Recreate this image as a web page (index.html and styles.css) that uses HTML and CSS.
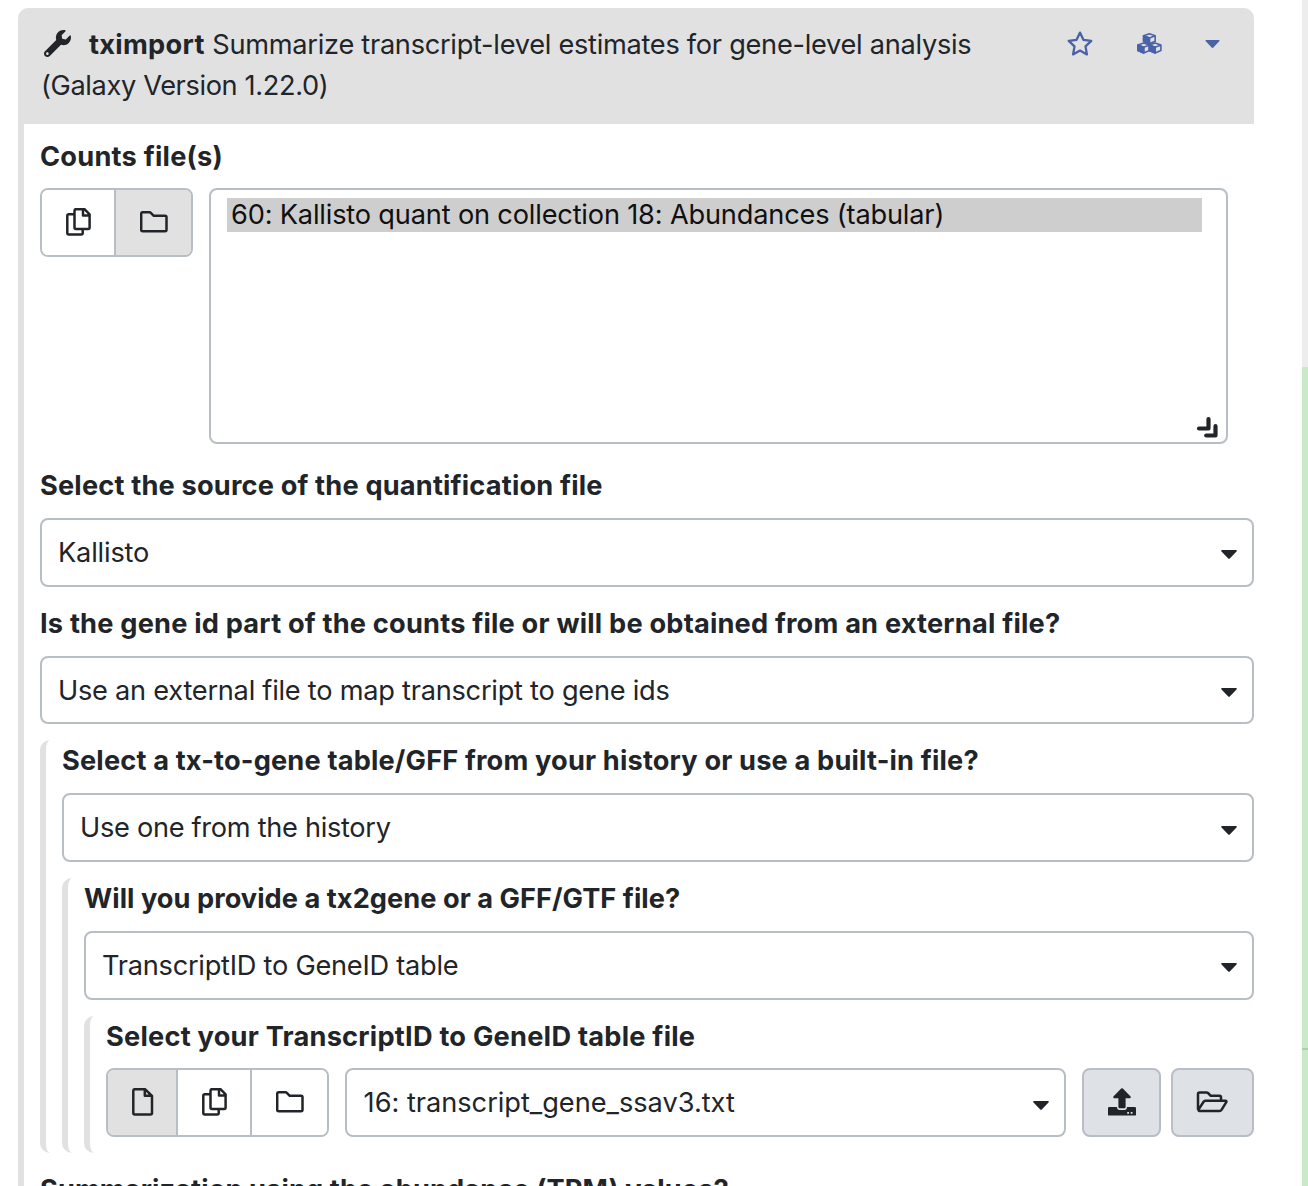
FILE: index.html
```html
<!DOCTYPE html>
<html lang="en">
<head>
<meta charset="utf-8">
<title>tximport</title>
<link rel="stylesheet" href="styles.css">
</head>
<body>
<svg class="defs" width="0" height="0">
  <symbol id="file" viewBox="0 0 22 28"><path d="M3 1.2H13L20 8V25Q20 26.5 18.5 26.5H2.8Q1.3 26.5 1.3 25V2.8Q1.3 1.2 3 1.2ZM12.8 1.5V7.8H20"/></symbol>
  <symbol id="copy" viewBox="0 0 26 28"><path d="M10 1.2H18.5L23.6 6.3V19.5Q23.6 21 22.1 21H10Q8.5 21 8.5 19.5V2.7Q8.5 1.2 10 1.2ZM17 1.5V7.6H23.5M8.5 6.3H2.8Q1.3 6.3 1.3 7.8V25Q1.3 26.5 2.8 26.5H15.2Q16.7 26.5 16.7 25V21"/></symbol>
  <symbol id="folder" viewBox="0 0 28 22"><path d="M2.6 1.3H9.5Q10.3 1.3 10.8 1.8L13.8 4.8H25Q26.5 4.8 26.5 6.3V18.7Q26.5 20.2 25 20.2H2.6Q1.2 20.2 1.2 18.7V2.8Q1.2 1.3 2.6 1.3Z"/></symbol>
  <symbol id="caret" viewBox="0 0 16 10"><path d="M1 0H15Q16.4 .3 15.5 1.5L9 8.3Q8 9.4 7 8.3L.5 1.5Q-.4 .3 1 0Z"/></symbol>
</svg>
<div class="page">
  <main class="tool">
    <header class="tool-head">
      <div class="title">
        <svg class="wrench" viewBox="0 0 512 512"><path d="M507.73 109.1c-2.24-9.03-13.54-12.09-20.12-5.51l-74.36 74.36-67.88-11.31-11.31-67.88 74.36-74.36c6.62-6.62 3.43-17.9-5.66-20.16-47.38-11.74-99.55.91-136.58 37.93-39.64 39.64-50.55 97.1-34.05 147.2L18.74 402.76c-24.99 24.99-24.99 65.51 0 90.5 24.99 24.99 65.51 24.99 90.5 0l213.21-213.21c50.12 16.71 107.47 5.68 147.37-34.22 37.07-37.07 49.7-89.32 37.91-136.73zM64 472c-13.25 0-24-10.75-24-24 0-13.26 10.75-24 24-24s24 10.74 24 24c0 13.25-10.75 24-24 24z"/></svg><b class="name">tximport</b> <span class="desc">Summarize transcript-level estimates for gene-level analysis</span><br><span class="version">(Galaxy Version 1.22.0)</span>
      </div>
      <div class="actions">
        <svg class="star" viewBox="0 0 26 25"><path d="M13 1.6L16.4 8.8L24.3 9.9L18.5 15.4L19.9 23.4L13 19.6L6.1 23.4L7.5 15.4L1.7 9.9L9.6 8.8Z"/></svg>
        <svg class="cubes" viewBox="0 0 25 22">
          <g id="cube"><path class="solid" d="M6.6 2.7L12.4 4.9V10.7L6.6 8.3Z"/><path d="M6.6 2.7L12.4 .8L18.2 2.7V8.3L12.4 10.7L6.6 8.3ZM6.6 2.7L12.4 4.9L18.2 2.7M12.4 4.9V10.7"/></g>
          <use href="#cube" x="-5.7" y="9.3"/><use href="#cube" x="5.7" y="9.3"/>
        </svg>
        <svg class="caret-small"><use href="#caret"/></svg>
      </div>
    </header>
    <section class="form">
      <div class="label l1">Counts file(s)</div>
      <div class="row counts">
        <div class="group">
          <div class="btn multi"><svg class="i-copy"><use href="#copy"/></svg></div>
          <div class="btn coll active"><svg class="i-folder"><use href="#folder"/></svg></div>
        </div>
        <div class="listbox">
          <div class="option"><span class="o1">60: Kallisto quant on collection 18: Abundances (tabular)</span></div>
          <svg class="grip" viewBox="0 0 21 21"><path d="M11.5 2V11.5H2M18.5 9.2V18.5H9.2"/></svg>
        </div>
      </div>
      <div class="label l2">Select the source of the quantification file</div>
      <div class="select"><span class="s1">Kallisto</span><svg class="caret"><use href="#caret"/></svg></div>
      <div class="label l3">Is the gene id part of the counts file or will be obtained from an external file?</div>
      <div class="select"><span class="s2">Use an external file to map transcript to gene ids</span><svg class="caret"><use href="#caret"/></svg></div>
      <div class="nest">
        <div class="label l4">Select a tx-to-gene table/GFF from your history or use a built-in file?</div>
        <div class="select"><span class="s3">Use one from the history</span><svg class="caret"><use href="#caret"/></svg></div>
        <div class="nest">
          <div class="label l5">Will you provide a tx2gene or a GFF/GTF file?</div>
          <div class="select"><span class="s4">TranscriptID to GeneID table</span><svg class="caret"><use href="#caret"/></svg></div>
          <div class="nest last">
            <div class="label l6">Select your TranscriptID to GeneID table file</div>
            <div class="row">
              <div class="group">
                <div class="btn single active"><svg class="i-file"><use href="#file"/></svg></div>
                <div class="btn multi2"><svg class="i-copy"><use href="#copy"/></svg></div>
                <div class="btn coll"><svg class="i-folder"><use href="#folder"/></svg></div>
              </div>
              <div class="select grow"><span class="s5">16: transcript_gene_ssav3.txt</span><svg class="caret"><use href="#caret"/></svg></div>
              <div class="side">
                <div class="box upload"><svg class="i-upload" viewBox="0 0 28 28"><path d="M13.2 .6Q14 -.2 14.8 .6L22.6 8.6Q23.4 10 22 10.2H17.6V19Q17.6 20.2 16.4 20.2H11.6Q10.4 20.2 10.4 19V10.2H6Q4.6 10 5.4 8.6Z"/><path fill-rule="evenodd" d="M1.2 19H8.9Q9.2 21.9 11.6 21.9H16.4Q18.8 21.9 19.1 19H26.8Q28 19 28 20.2V26.4Q28 27.6 26.8 27.6H1.2Q0 27.6 0 26.4V20.2Q0 19 1.2 19ZM19.2 24H21V25.8H19.2ZM22.7 24H24.5V25.8H22.7Z"/></svg></div>
                <div class="box browse"><svg class="i-open" viewBox="0 0 32 22"><path d="M2 18.7V3Q2 1.4 3.6 1.4H10.6Q11.4 1.4 12 2L14.8 4.8H23.4Q25 4.8 25 6.4V9.6M3.4 19.9H23.6Q24.8 19.9 25.5 18.8L30.3 11.2Q30.8 9.8 29.5 9.8H9.2Q8.2 9.8 7.6 10.8L2.5 18.6Q2.4 19.9 3.4 19.9Z"/></svg></div>
              </div>
            </div>
          </div>
        </div>
      </div>
      <div class="label l7">Summarization using the abundance (TPM) values?</div>
    </section>
  </main>
  <aside class="history"><div class="h-top"></div><div class="h-item"></div><div class="h-item"></div></aside>
</div>
</body>
</html>
```
FILE: styles.css
```css
* { box-sizing: border-box; }
body { margin: 0; background: #fff; color: #212529; font: 27.2px/40.8px Inter, "Liberation Sans", sans-serif; }
svg { display: block; overflow: visible; }
.defs { position: absolute; }
.page { height: 1186px; overflow: hidden; display: flex; justify-content: space-between; }
.tool { width: 1236px; margin: 8px 0 0 18px; }
.tool-head { height: 116px; background: #e1e1e1; border-radius: 10px 10px 0 0; display: flex; justify-content: space-between; padding: 16px 34px 0 23px; }
.title { white-space: nowrap; padding-top: 1px; }
.wrench { display: inline-block; width: 27px; height: 27px; vertical-align: -3px; margin: 0 18.5px 0 2.5px; fill: #212529; }
.name { letter-spacing: .3px; }
.desc { letter-spacing: -.28px; }
.version { letter-spacing: -.37px; }
.actions { display: flex; align-items: center; height: 40px; color: #4a62a6; }
.star { width: 26px; height: 25px; fill: none; stroke: currentColor; stroke-width: 2.3; stroke-linejoin: round; margin: -2px 44px 0 0; }
.cubes { width: 25px; height: 22px; fill: none; stroke: currentColor; stroke-width: 1.6; stroke-linejoin: round; margin: -1px 43px 0 0; }
.cubes .solid { fill: currentColor; }
.caret-small { width: 15px; height: 9px; fill: currentColor; }
.form { border-left: 6px solid #e1e1e1; padding: 11.4px 0 40px 16px; }
.label { height: 40.8px; padding-top: 1px; font-weight: 700; margin-bottom: 12px; white-space: nowrap; }
.l1 { padding-top: 2px; letter-spacing: .23px; }
.l2 { letter-spacing: .18px; }
.l3 { letter-spacing: .2px; }
.l4 { letter-spacing: .17px; }
.l5 { letter-spacing: .04px; }
.l6 { letter-spacing: .23px; }
.l7 { letter-spacing: .11px; }
.o1 { letter-spacing: -.18px; }
.s1 { letter-spacing: -.18px; }
.s2 { letter-spacing: -.25px; }
.s3 { letter-spacing: -.3px; }
.s4 { letter-spacing: -.25px; }
.s5 { letter-spacing: -.02px; padding-left: .6px; }
.row { display: flex; align-items: flex-start; gap: 16px; }
.counts { height: 277px; padding-right: 26px; }
.group { display: flex; height: 68.8px; border: 2px solid #b8bec5; border-radius: 8px; overflow: hidden; }
.btn { display: flex; align-items: center; justify-content: center; background: #fff; padding-bottom: 2px; }
.btn + .btn { border-left: 2px solid #b8bec5; }
.btn.active { background: #e1e1e1; }
.btn svg { fill: none; stroke: #212529; stroke-width: 2.5; stroke-linejoin: round; }
.single { width: 68px; padding-left: 1px; }
.multi { width: 72px; padding-left: 1px; }
.multi2 { width: 74px; padding-left: 1px; }
.coll { width: 77px; }
.i-file { width: 22px; height: 28px; }
.i-copy { width: 26px; height: 28px; }
.i-folder { width: 28px; height: 22px; }
.listbox { flex: 1; height: 256px; border: 2px solid #b8bec5; border-radius: 8px; padding: 8px 24px 6px 16px; display: flex; flex-direction: column; justify-content: space-between; }
.option { height: 34px; line-height: 34px; padding-left: 4px; background: #cecece; color: #101010; white-space: nowrap; }
.grip { width: 21px; height: 21px; align-self: flex-end; margin: 0 -16px -1.5px 0; fill: none; stroke: #212529; stroke-width: 4.2; stroke-linejoin: round; stroke-linecap: round; }
.select { height: 68.8px; border: 2px solid #b8bec5; border-radius: 8px; display: flex; align-items: center; justify-content: space-between; padding: 2px 15px 0 16px; margin-bottom: 16px; white-space: nowrap; }
.select span { display: block; }
.caret { width: 16px; height: 10px; fill: #212529; margin-top: 4px; }
.grow { flex: 1; margin: 0; }
.nest { border-left: 6px solid #e1e1e1; border-radius: 10px 0 0 10px; padding-left: 16px; }
.last { padding-bottom: 16px; margin-bottom: 16px; }
.side { display: flex; gap: 10px; }
.box { height: 68.8px; border: 2px solid #b8bec5; border-radius: 8px; background: #dee1e6; display: flex; align-items: center; justify-content: center; padding-bottom: 2px; }
.upload { width: 79px; }
.browse { width: 83px; padding-right: 1px; }
.i-upload { width: 28px; height: 28px; fill: #212529; }
.i-open { width: 32px; height: 22px; fill: none; stroke: #212529; stroke-width: 2.5; stroke-linejoin: round; }
.history { width: 6px; display: flex; flex-direction: column; }
.h-top { height: 367px; flex: none; background: #ededed; }
.h-item { height: 683px; flex: none; background: #c8eac5; border-bottom: 2px solid #b0cbae; }
```
